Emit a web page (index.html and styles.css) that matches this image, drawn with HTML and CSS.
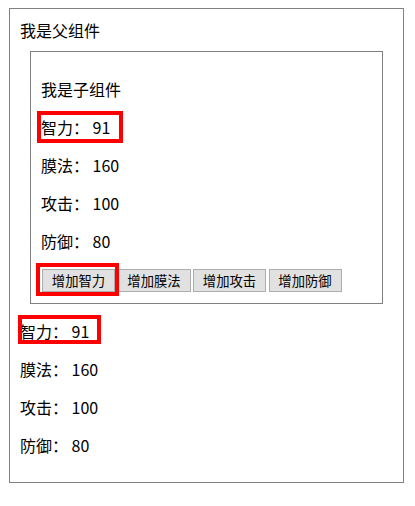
FILE: index.html
```html
<!DOCTYPE html>
<html lang="zh">
<head>
<meta charset="utf-8">
<title>父子组件</title>
<link rel="stylesheet" href="styles.css">
</head>
<body>
<div class="parent">
  <div class="title">我是父组件</div>
  <div class="child">
    <p class="row">我是子组件</p>
    <p class="row"><span class="hl hl-child">智力： 91</span></p>
    <p class="row">膜法： 160</p>
    <p class="row">攻击： 100</p>
    <p class="row">防御： 80</p>
    <div class="btns">
      <span class="hl-btn"><button class="btn">增加智力</button></span>
      <button class="btn">增加膜法</button>
      <button class="btn">增加攻击</button>
      <button class="btn">增加防御</button>
    </div>
  </div>
  <p class="row"><span class="hl hl-parent">智力： 91</span></p>
  <p class="row">膜法： 160</p>
  <p class="row">攻击： 100</p>
  <p class="row">防御： 80</p>
</div>
</body>
</html>
```
FILE: styles.css
```css
body {
  margin: 8px;
  font-family: "Noto Sans CJK SC", "Noto Sans", sans-serif;
  font-size: 16px;
  color: #000;
  background: #fff;
}

.parent {
  box-sizing: border-box;
  width: 395px;
  margin-left: 1px;
  border: 1px solid #808080;
  padding: 10px;
}

.title {
  line-height: 22px;
}

.child {
  margin: 10px;
  border: 1px solid #808080;
  padding: 10px;
}

.row {
  margin: 16px 0;
  line-height: 22px;
}

.hl {
  position: relative;
  display: inline-block;
  vertical-align: top;
  line-height: 22px;
}

.hl::after {
  content: "";
  position: absolute;
  box-sizing: border-box;
  border: 4px solid #ff0000;
}

.hl-child {
  width: 78px;
}

.hl-child::after {
  top: -5px;
  bottom: -5px;
  left: -4px;
  right: -4px;
}

.hl-parent {
  width: 77px;
}

.hl-parent::after {
  top: -5px;
  bottom: -2px;
  left: -2px;
  right: -4px;
}

.btns {
  display: flex;
  align-items: flex-start;
  gap: 2.5px;
  height: 25px;
  padding-top: 1px;
  box-sizing: border-box;
  padding-left: 1px;
}

.btn {
  box-sizing: border-box;
  width: 73px;
  height: 23px;
  margin: 0;
  padding: 0;
  border: 1px solid #adadad;
  background: #e1e1e1;
  color: #000;
  font-family: "Noto Sans CJK SC", "Noto Sans", sans-serif;
  font-size: 13.33px;
  line-height: 19px;
}

.hl-btn {
  position: relative;
  display: flex;
}

.hl-btn::after {
  content: "";
  position: absolute;
  box-sizing: border-box;
  top: -6px;
  left: -6px;
  right: -4px;
  bottom: -4px;
  border: 4px solid #ff0000;
  pointer-events: none;
}
```
